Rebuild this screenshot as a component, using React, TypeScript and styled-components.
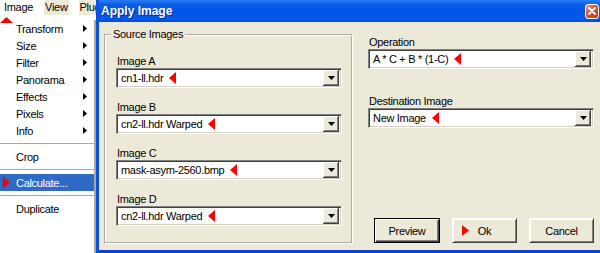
import React from "react"
import styled, { createGlobalStyle } from "styled-components"

const BEIGE = "#ece9d8"

const GlobalStyle = createGlobalStyle`
  html, body {
    margin: 0;
    padding: 0;
    background: #fff;
    overflow: hidden;
  }
  body {
    font-family: "Liberation Sans", Arial, sans-serif;
    font-size: 11px;
    letter-spacing: -0.3px;
    color: #000;
  }
`

type Dir = "up" | "down" | "left" | "right"

const TriSvg = styled.svg`
  display: block;
  flex-shrink: 0;
`

const Tri = ({ dir, w, h, color }: { dir: Dir; w: number; h: number; color: string }) => {
    const pts = {
        right: `0,0 ${w},${h / 2} 0,${h}`,
        left: `${w},0 0,${h / 2} ${w},${h}`,
        up: `0,${h} ${w / 2},0 ${w},${h}`,
        down: `0,0 ${w},0 ${w / 2},${h}`,
    }[dir]
    return (
        <TriSvg width={w} height={h} viewBox={`0 0 ${w} ${h}`}>
            <polygon points={pts} fill={color} />
        </TriSvg>
    )
}

const Desktop = styled.div`
    display: flex;
    width: 600px;
    height: 253px;
    overflow: hidden;
    background: #fff;
`

const LeftColumn = styled.div`
    width: 96px;
    flex-shrink: 0;
    display: flex;
    flex-direction: column;
    overflow: hidden;
`

const MenuBar = styled.div`
    height: 20px;
    display: flex;
    align-items: flex-start;
    background: #fff;
    white-space: nowrap;
`

const MenuBarItem = styled.div<{ $shaded?: boolean; $gap?: number }>`
    position: relative;
    height: 15px;
    line-height: 15px;
    padding: 0 ${({ $shaded }) => ($shaded ? "1px" : "11px 0 4px")};
    margin-left: ${({ $gap }) => $gap ?? 0}px;
    background: ${({ $shaded }) => ($shaded ? BEIGE : "#fff")};
`

const MenuMarker = styled.span`
    position: absolute;
    left: 0;
    top: 17px;
    z-index: 2;
`

const DropMenu = styled.div`
    flex: 1;
    display: flex;
    flex-direction: column;
    background: #fff;
    border-right: 2px solid #aca899;
`

const MenuItem = styled.div<{ $active?: boolean }>`
    height: 17px;
    display: grid;
    grid-template-columns: 16px 1fr 11px;
    align-items: center;
    background: ${({ $active }) => ($active ? "#316ac5" : "transparent")};
    color: ${({ $active }) => ($active ? "#fff" : "#000")};
    white-space: nowrap;
`

const ItemMark = styled.span`
    display: flex;
    padding-left: 3px;
`

const Separator = styled.div`
    height: 9px;
    display: flex;
    align-items: center;
    &::before {
        content: "";
        flex: 1;
        height: 1px;
        background: #aca899;
    }
`

const Dialog = styled.div`
    width: 507px;
    height: 254px;
    flex-shrink: 0;
    box-sizing: border-box;
    display: flex;
    flex-direction: column;
    border: 3px solid #0a4fe0;
    border-top: none;
    border-bottom-width: 4px;
    border-bottom-color: #0843d6;
`

const TitleBar = styled.div`
    height: 22px;
    display: flex;
    align-items: center;
    justify-content: space-between;
    padding: 0 1px 0 2px;
    background: linear-gradient(to bottom, #2a7cf3 0%, #0b5de8 22%, #0055e5 55%, #005aeb 85%, #0a4bd2 100%);
`

const Title = styled.span`
    font-size: 12px;
    font-weight: bold;
    letter-spacing: 0;
    color: #fff;
    text-shadow: 1px 1px 0 #0a2a9a;
`

const CloseButton = styled.div`
    width: 14px;
    height: 15px;
    box-sizing: border-box;
    border: 1px solid #fff;
    border-radius: 3px;
    display: flex;
    align-items: center;
    justify-content: center;
    background: linear-gradient(135deg, #ec9a7f 0%, #d9532d 45%, #c13a17 100%);
`

const DialogBody = styled.div`
    flex: 1;
    display: flex;
    gap: 15px;
    padding: 6px 6px 6px 5px;
    background: ${BEIGE};
`

const GroupBox = styled.fieldset`
    margin: 0;
    width: 249px;
    flex-shrink: 0;
    box-sizing: border-box;
    border: 2px groove #fff;
    padding: 14px 9px 0 10px;
    min-width: 0;
`

const GroupTitle = styled.legend`
    padding: 0 2px;
    margin-left: -5px;
    line-height: 13px;
`

const FieldList = styled.div`
    display: flex;
    flex-direction: column;
    gap: 13px;
`

const Field = styled.div<{ $top?: number }>`
    display: flex;
    flex-direction: column;
    margin-top: ${({ $top }) => $top ?? 0}px;
`

const FieldLabel = styled.div`
    height: 13px;
    line-height: 13px;
    padding-left: 1px;
    white-space: nowrap;
`

const ComboBox = styled.div`
    height: 20px;
    box-sizing: border-box;
    display: flex;
    align-items: center;
    gap: 6px;
    padding: 0 2px 0 4px;
    background: #fff;
    border: 1px solid;
    border-color: #808080 #fff #fff #808080;
    box-shadow: inset 1px 1px 0 #404040, inset -1px -1px 0 #d4d0c8;
`

const ComboText = styled.span`
    white-space: nowrap;
`

const ComboButton = styled.div`
    margin-left: auto;
    width: 16px;
    height: 16px;
    display: flex;
    align-items: center;
    justify-content: center;
    background: ${BEIGE};
    box-shadow: inset -1px -1px 0 #404040, inset 1px 1px 0 #fff, inset -2px -2px 0 #808080;
`

const RightColumn = styled.div`
    width: 226px;
    display: flex;
    flex-direction: column;
    padding-top: 8px;
`

const ButtonRow = styled.div`
    margin-top: auto;
    margin-bottom: 1px;
    display: flex;
    justify-content: flex-end;
    gap: 12px;
`

const PushButton = styled.div<{ $default?: boolean; $width: number }>`
    width: ${({ $width }) => $width}px;
    height: 25px;
    box-sizing: border-box;
    display: grid;
    grid-template-columns: 1fr auto 1fr;
    align-items: center;
    background: ${BEIGE};
    border: 1px solid ${({ $default }) => ($default ? "#000" : "transparent")};
    box-shadow: ${({ $default }) =>
        $default
            ? "inset 1px 1px 0 #fff, inset -1px -1px 0 #404040, inset -2px -2px 0 #808080"
            : "inset 1px 1px 0 #fff, inset -1px -1px 0 #808080"};
    ${({ $default }) => (!$default ? "border-color: #fff #404040 #404040 #fff;" : "")}
`

const ButtonMark = styled.span`
    justify-self: end;
    margin-right: 9px;
`

const ButtonText = styled.span`
    grid-column: 2;
`

const menuItems: { label: string; sub?: boolean }[] = [
    { label: "Transform", sub: true },
    { label: "Size", sub: true },
    { label: "Filter", sub: true },
    { label: "Panorama", sub: true },
    { label: "Effects", sub: true },
    { label: "Pixels", sub: true },
    { label: "Info", sub: true },
]

const sources = [
    { label: "Image A", value: "cn1-ll.hdr" },
    { label: "Image B", value: "cn2-ll.hdr Warped" },
    { label: "Image C", value: "mask-asym-2560.bmp" },
    { label: "Image D", value: "cn2-ll.hdr Warped" },
]

const Combo = ({ value }: { value: string }) => (
    <ComboBox>
        <ComboText>{value}</ComboText>
        <Tri dir="left" w={7} h={12} color="#f00" />
        <ComboButton>
            <Tri dir="down" w={7} h={4} color="#000" />
        </ComboButton>
    </ComboBox>
)

export default function App() {
    return (
        <>
            <GlobalStyle />
            <Desktop>
                <LeftColumn>
                    <MenuBar>
                        <MenuBarItem>
                            Image
                            <MenuMarker>
                                <Tri dir="up" w={13} h={6} color="#f00" />
                            </MenuMarker>
                        </MenuBarItem>
                        <MenuBarItem $shaded>View</MenuBarItem>
                        <MenuBarItem $shaded $gap={10}>Plug</MenuBarItem>
                    </MenuBar>
                    <DropMenu>
                        {menuItems.map((m) => (
                            <MenuItem key={m.label}>
                                <span />
                                <span>{m.label}</span>
                                {m.sub && <Tri dir="right" w={4} h={7} color="#000" />}
                            </MenuItem>
                        ))}
                        <Separator />
                        <MenuItem>
                            <span />
                            <span>Crop</span>
                        </MenuItem>
                        <Separator />
                        <MenuItem $active>
                            <ItemMark>
                                <Tri dir="right" w={7} h={13} color="#f00" />
                            </ItemMark>
                            <span>Calculate...</span>
                        </MenuItem>
                        <Separator />
                        <MenuItem>
                            <span />
                            <span>Duplicate</span>
                        </MenuItem>
                    </DropMenu>
                </LeftColumn>

                <Dialog>
                    <TitleBar>
                        <Title>Apply Image</Title>
                        <CloseButton>
                            <svg width="8" height="8" viewBox="0 0 8 8">
                                <path d="M1 1 L7 7 M7 1 L1 7" stroke="#fff" strokeWidth="1.8" strokeLinecap="round" />
                            </svg>
                        </CloseButton>
                    </TitleBar>
                    <DialogBody>
                        <GroupBox>
                            <GroupTitle>Source Images</GroupTitle>
                            <FieldList>
                                {sources.map((s) => (
                                    <Field key={s.label}>
                                        <FieldLabel>{s.label}</FieldLabel>
                                        <Combo value={s.value} />
                                    </Field>
                                ))}
                            </FieldList>
                        </GroupBox>
                        <RightColumn>
                            <Field>
                                <FieldLabel>Operation</FieldLabel>
                                <Combo value="A * C + B * (1-C)" />
                            </Field>
                            <Field $top={26}>
                                <FieldLabel>Destination Image</FieldLabel>
                                <Combo value="New Image" />
                            </Field>
                            <ButtonRow>
                                <PushButton $default $width={66}>
                                    <ButtonText>Preview</ButtonText>
                                </PushButton>
                                <PushButton $width={65}>
                                    <ButtonMark>
                                        <Tri dir="right" w={7} h={11} color="#f00" />
                                    </ButtonMark>
                                    <ButtonText>Ok</ButtonText>
                                </PushButton>
                                <PushButton $width={65}>
                                    <ButtonText>Cancel</ButtonText>
                                </PushButton>
                            </ButtonRow>
                        </RightColumn>
                    </DialogBody>
                </Dialog>
            </Desktop>
        </>
    )
}
